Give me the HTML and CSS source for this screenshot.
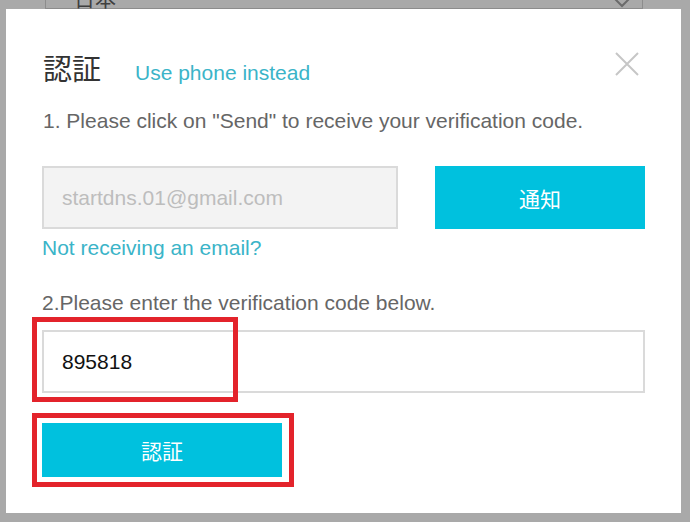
FILE: index.html
```html
<!DOCTYPE html>
<html lang="ja">
<head>
<meta charset="utf-8">
<title>認証</title>
<link rel="stylesheet" href="styles.css">
</head>
<body>
<div class="page">
  <div class="select-box">
    <span class="select-text">日本</span>
    <svg class="chevron" width="20" height="12" viewBox="0 0 20 12"><path d="M1 1 L10 10 L19 1" fill="none" stroke="#6a6a6a" stroke-width="2"/></svg>
  </div>
</div>

<div class="modal">
  <div class="modal-header">
    <h2 class="modal-title">認証</h2>
    <a class="link switch-link">Use phone instead</a>
  </div>
  <button class="close-btn" aria-label="close">
    <svg width="24" height="24" viewBox="0 0 24 24"><path d="M1 1 L23 23 M23 1 L1 23" stroke="#c6c6c6" stroke-width="2" fill="none"/></svg>
  </button>

  <p class="step step-one">1. Please click on "Send" to receive your verification code.</p>

  <div class="email-row">
    <div class="email-input">startdns.01@gmail.com</div>
    <button class="primary-btn send-btn">通知</button>
  </div>
  <a class="link no-email">Not receiving an email?</a>

  <p class="step step-two">2.Please enter the verification code below.</p>
  <div class="code-input">895818</div>

  <button class="primary-btn verify-btn">認証</button>
</div>

<div class="mark mark-code"></div>
<div class="mark mark-button"></div>
</body>
</html>
```

FILE: styles.css
```css
* { box-sizing: border-box; }

html, body {
  margin: 0;
  padding: 0;
}

body {
  width: 690px;
  height: 522px;
  overflow: hidden;
  position: relative;
  background: #a9a9a9;
  font-family: "Liberation Sans", "Noto Sans CJK JP", sans-serif;
}

.page {
  padding: 0 47px 0 45px;
}

.select-box {
  margin-top: -31px;
  height: 40px;
  border: 1px solid #8c8c8c;
  display: flex;
  align-items: center;
  justify-content: space-between;
  padding: 0 10px 0 28px;
}

.select-text {
  font-family: "Noto Sans CJK JP", sans-serif;
  font-size: 21px;
  color: #3f3f3f;
  margin-top: 16px;
}

.chevron {
  margin-top: 26px;
}

.modal {
  position: absolute;
  left: 6px;
  top: 9px;
  width: 675px;
  height: 504px;
  background: #ffffff;
  padding: 42px 36px 36px 36px;
  display: flex;
  flex-direction: column;
  align-items: flex-start;
}

.modal-header {
  display: flex;
  align-items: baseline;
  height: 32px;
  line-height: 32px;
}

.modal-title {
  margin: 0;
  font-family: "Noto Sans CJK JP", sans-serif;
  font-weight: normal;
  font-size: 29px;
  color: #333333;
  margin-left: 1px;
}

.link {
  color: #3bb4c8;
  font-size: 21px;
  line-height: 24px;
  cursor: pointer;
}

.switch-link {
  margin-left: 34px;
}

.close-btn {
  position: absolute;
  left: 609px;
  top: 43px;
  width: 24px;
  height: 24px;
  padding: 0;
  border: 0;
  background: transparent;
  display: flex;
}

.step {
  margin: 0;
  font-size: 21px;
  line-height: 24px;
  color: #666666;
}

.step-one {
  margin-top: 26px;
  margin-left: 1px;
}

.email-row {
  margin-top: 33px;
  width: 100%;
  display: flex;
  justify-content: space-between;
}

.email-input {
  width: 356px;
  height: 63px;
  background: #f3f3f3;
  border: 2px solid #dadada;
  font-size: 21px;
  color: #bdbdbd;
  display: flex;
  align-items: center;
  padding-left: 18px;
}

.primary-btn {
  border: 0;
  background: #00c1de;
  color: #ffffff;
  font-family: "Noto Sans CJK JP", sans-serif;
  font-size: 21px;
  padding: 0;
  cursor: pointer;
}

.send-btn {
  width: 210px;
  height: 63px;
}

.no-email {
  margin-top: 7px;
}

.step-two {
  margin-top: 31px;
}

.code-input {
  margin-top: 15px;
  width: 100%;
  height: 63px;
  border: 2px solid #dadada;
  background: #ffffff;
  font-size: 21px;
  color: #111111;
  display: flex;
  align-items: center;
  padding-left: 18px;
}

.verify-btn {
  margin-top: 30px;
  width: 240px;
  height: 54px;
}

.mark {
  position: absolute;
  border: 5px solid #e3232b;
}

.mark-code {
  left: 32px;
  top: 317px;
  width: 206px;
  height: 85px;
}

.mark-button {
  left: 32px;
  top: 413px;
  width: 262px;
  height: 74px;
}
```
